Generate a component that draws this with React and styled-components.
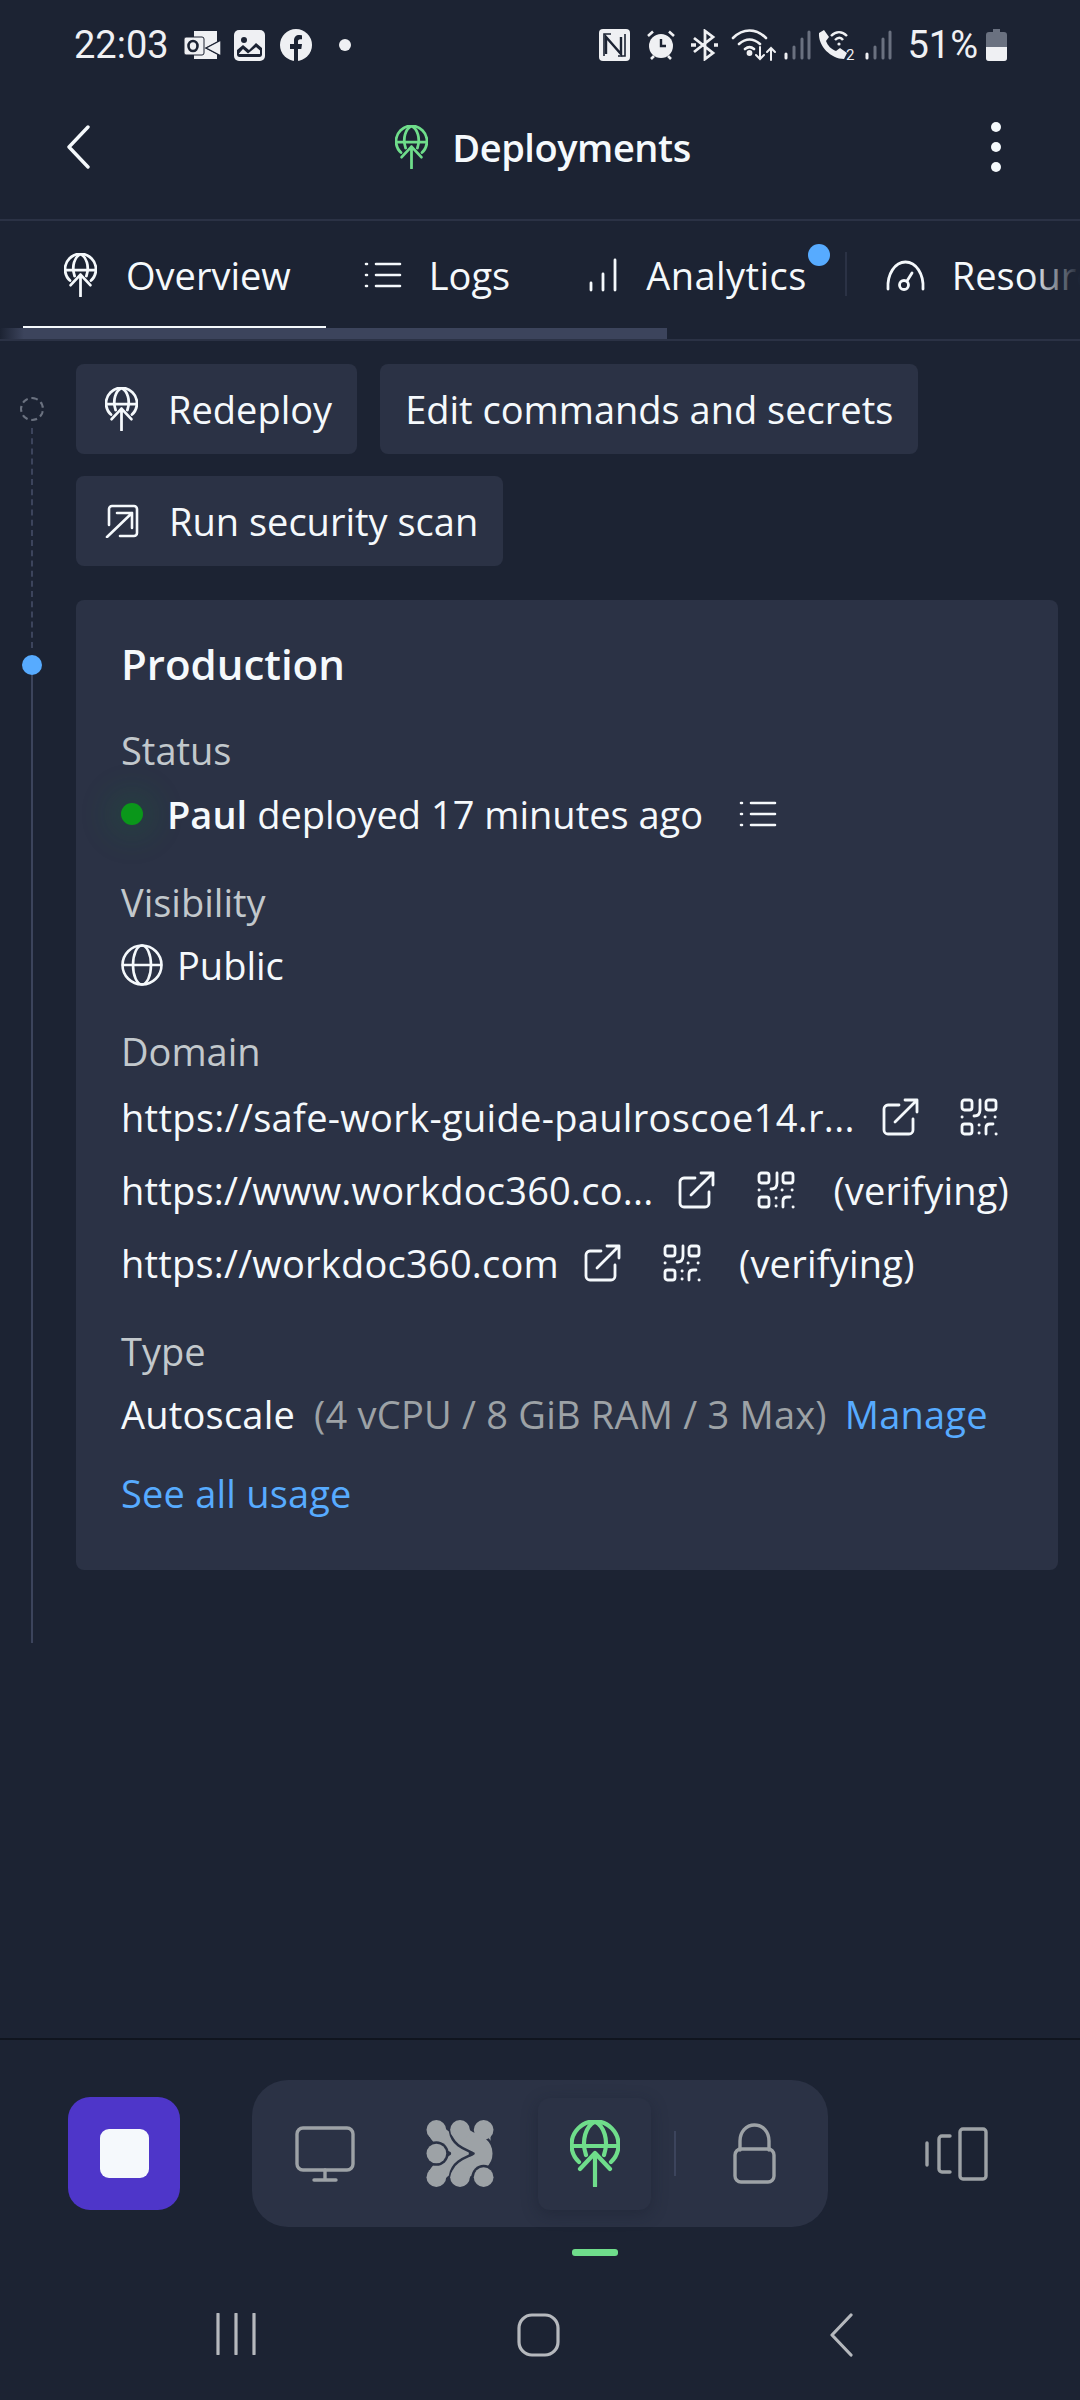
import React from "react";
import styled, { createGlobalStyle } from "styled-components";

const Global = createGlobalStyle`
  html, body { margin: 0; padding: 0; background: #1c2333; }
  * { box-sizing: border-box; }
`;

const Screen = styled.div`
  width: 1080px; height: 2400px; background: #1c2333; color: #f5f9fc;
  display: flex; flex-direction: column; overflow: hidden;
  font-family: "Open Sans", "Noto Sans", sans-serif; font-size: 38px; letter-spacing: 0;
`;
const StatusBar = styled.div`
  height: 90px; padding: 0 73px 0 74px; display: flex; align-items: center; justify-content: space-between;
  font-family: Roboto, sans-serif; letter-spacing: 0; color: #eff0f3; font-size: 38px;
`;
const StatusGroup = styled.div`display: flex; align-items: center;`;
const StatusSlot = styled.span`display: flex; align-items: center; margin-left: ${p => p.$ml ?? 0}px;`;
const Header = styled.div`
  height: 131px; padding: 0 79px 16px 66px; display: flex; align-items: center; justify-content: space-between;
  border-bottom: 2px solid #2b3245;
`;
const Title = styled.div`display: flex; align-items: center; gap: 24px; margin-left: 5px; font-size: 38px; font-weight: 600; letter-spacing: -0.45px;`;
const TabBar = styled.div`
  position: relative; height: 120px; display: flex; align-items: stretch; padding-left: 23px; overflow: hidden;
  border-bottom: 2px solid #2b3245; flex: none;
`;
const Tab = styled.div`
  position: relative; flex: none; display: flex; align-items: center; gap: ${p => p.$gap ?? 29}px; padding: 0 ${p => p.$pr ?? 37}px 0 ${p => p.$pl ?? 40}px; height: 107px;
  white-space: nowrap; color: #f5f9fc; letter-spacing: ${p => p.$ls ?? 0}px;
`;
const Underline = styled.span`position: absolute; left: 0; right: 0; bottom: 0; height: 2px; background: #f5f9fc;`;
const Badge = styled.span`position: absolute; right: 15px; top: 23px; width: 22px; height: 22px; border-radius: 50%; background: #57abff;`;
const TabDivider = styled.span`flex: none; width: 2px; height: 44px; background: #2b3245; margin-top: 31px;`;
const Thumb = styled.div`
  position: absolute; left: 0; bottom: 0; width: 667px; height: 11px;
  background: linear-gradient(90deg, #1c2333 0, #3c445c 24px);
`;
const Fade = styled.div`position: absolute; right: 0; top: 0; bottom: 11px; width: 50px; background: linear-gradient(90deg, rgba(28,35,51,0), #1c2333);`;
const Body = styled.div`flex: 1; display: flex; min-height: 0;`;
const Rail = styled.div`width: 64px; margin-right: 12px; flex: none; padding: 56px 0 0 0; display: flex; flex-direction: column; align-items: center;`;
const RingDot = styled.span`width: 24px; height: 24px; border: 2px dashed #6b7280; border-radius: 50%; flex: none;`;
const DashLine = styled.span`width: 0; height: 220px; margin: 7px 0; border-left: 2px dashed #3c445c;`;
const BlueDot = styled.span`width: 20px; height: 20px; border-radius: 50%; background: #57abff; flex: none;`;
const SolidLine = styled.span`width: 2px; height: 968px; background: #3c445c;`;
const Main = styled.div`flex: 1; padding: 23px 22px 0 0; min-width: 0;`;
const Actions = styled.div`display: flex; flex-wrap: wrap; gap: 22px 23px; margin-bottom: 34px;`;
const ActionButton = styled.div`
  height: 90px; background: #2b3245; border-radius: 8px; display: flex; align-items: center; gap: 30px; padding: 0 25px 0 ${p => p.$pl ?? 29}px; white-space: nowrap;
`;
const Card = styled.div`
  background: #2b3245; border-radius: 8px; padding: 39px 46px 50px 45px; height: 970px;
`;
const CardTitle = styled.div`font-size: 42px; font-weight: 600; line-height: 50px; letter-spacing: 0; margin-bottom: 36px;`;
const Field = styled.div`display: flex; flex-direction: column; gap: ${p => p.$gap ?? 14}px; margin-bottom: ${p => p.$mb ?? 38}px;`;
const Label = styled.div`color: #c2c8cc; line-height: 50px;`;
const Line = styled.div`display: flex; align-items: center; height: 50px; white-space: nowrap; letter-spacing: ${p => p.$ls ?? 0}px; gap: ${p => p.$gap ?? 0}px;`;
const GreenDot = styled.span`width: 22px; height: 22px; margin: 0 24px 0 0; border-radius: 50%; background: #0a971a; box-shadow: 0 0 30px 14px rgba(16,130,50,0.16); flex: none;`;
const Strong = styled.span`font-weight: 600; margin-right: 10px;`;
const IconGap = styled.span`display: flex; margin-left: ${p => p.$ml}px;`;
const DomainList = styled.div`display: flex; flex-direction: column; gap: 23px;`;
const Muted = styled.span`color: #9da2a6; margin: 0 18px 0 19px;`;
const LinkText = styled.span`color: #57abff;`;
const SeeAll = styled.div`color: #57abff; line-height: 50px; margin-top: -8px; letter-spacing: 0.2px;`;
const Dock = styled.div`
  flex: none; height: 234px; border-top: 2px solid #10151f; display: flex; align-items: flex-start; padding: 40px 0 0 68px; position: relative;
`;
const StopButton = styled.div`width: 112px; height: 113px; margin-top: 17px; border-radius: 22px; background: #4e36c9; display: flex; align-items: center; justify-content: center; flex: none;`;
const StopSquare = styled.span`width: 49px; height: 49px; border-radius: 9px; background: #f5f9fc;`;
const Pill = styled.div`
  width: 576px; height: 147px; margin-left: 72px; border-radius: 36px; background: #2b3245; display: flex; align-items: center; position: relative; flex: none;
`;
const DockItem = styled.div`position: absolute; left: ${p => p.$x}px; top: ${p => p.$y}px; display: flex;`;
const ActiveItem = styled.div`
  position: absolute; left: 286px; top: 18px; width: 113px; height: 112px; border-radius: 12px; background: #2b3245;
  box-shadow: 0 4px 16px rgba(20,26,40,0.35); display: flex; justify-content: center; padding-top: 22px;
`;
const DockDivider = styled.span`position: absolute; left: 422px; top: 51px; width: 2px; height: 45px; background: #3c445c;`;
const Indicator = styled.span`position: absolute; left: 572px; top: 209px; width: 46px; height: 7px; border-radius: 3px; background: #6fdd8b;`;
const Panels = styled.div`margin-left: 97px; margin-top: 47px; display: flex;`;
const NavBar = styled.div`flex: none; height: 128px; display: flex; align-items: flex-start; padding: 41px 0 0 216px;`;
const NavSlot = styled.span`display: flex; margin-left: ${p => p.$ml}px;`;

const Stroke = ({ w, h, vb, c = "#f5f9fc", sw = 3, children, fill = "none" }) => (
  <svg width={w} height={h} viewBox={vb} fill={fill} stroke={c} strokeWidth={sw} strokeLinecap="round" strokeLinejoin="round" style={{ flex: "none" }}>{children}</svg>
);
const GlobeUp = ({ w = 33, h = 44, c = "#f5f9fc", sw = 4.2 }) => (
  <Stroke w={w} h={h} vb="0 0 50 67" c={c} sw={sw}>
    <path d="M9 42A23.5 23.5 0 1 1 41 42" />
    <path d="M16 35C11 20 16 6 25 1.6C34 6 39 20 34 35" />
    <path d="M2 26H48" />
    <path d="M25 66V33M10 49L25 33L40 49" />
  </Stroke>
);
const ListIcon = () => (
  <Stroke w={38} h={28} vb="0 0 38 28" sw={2.6}>
    <path d="M12 3H36M12 14H36M12 25H36" /><path d="M2 3H3M2 14H3M2 25H3" />
  </Stroke>
);
const BarsIcon = () => (
  <Stroke w={28} h={34} vb="0 0 28 34" sw={2.8}>
    <path d="M2 32V25M14 32V16M26 32V2" />
  </Stroke>
);
const GaugeIcon = () => (
  <Stroke w={41} h={32} vb="0 0 41 32" sw={2.8}>
    <path d="M3 30C2 15 10 3 20.5 3C31 3 39 15 38 30" /><circle cx="19" cy="26" r="4.5" /><path d="M22 22L27 14" />
  </Stroke>
);
const ScanIcon = () => (
  <Stroke w={34} h={34} vb="0 0 34 34" sw={2.6}>
    <path d="M4 21V5A3 3 0 0 1 7 2H29A3 3 0 0 1 32 5V29A3 3 0 0 1 29 32H15" />
    <path d="M2 33L27 9M12 9H27V24" />
  </Stroke>
);
const GlobeIcon = () => (
  <Stroke w={42} h={42} vb="0 0 42 42" sw={2.6}>
    <circle cx="21" cy="21" r="19.5" /><ellipse cx="21" cy="21" rx="9" ry="19.5" /><path d="M2 21H40" />
  </Stroke>
);
const ExtIcon = () => (
  <Stroke w={37} h={38} vb="0 0 37 38" sw={2.8}>
    <path d="M17 7H6A4 4 0 0 0 2 11V32A4 4 0 0 0 6 36H27A4 4 0 0 0 31 32V21" />
    <path d="M13 24L35 2M23 2H35V14" />
  </Stroke>
);
const QrIcon = () => (
  <Stroke w={38} h={38} vb="0 0 38 38" sw={2.8}>
    <rect x="2" y="2" width="10" height="10" rx="2.5" /><rect x="26" y="2" width="10" height="10" rx="2.5" /><rect x="2" y="26" width="10" height="10" rx="2.5" />
    <path d="M20 2V12C20 16 18 18 14 18" /><path d="M2 19H2.2M25 19H25.2M35 19H35.2M19 27H19.2M19 35H19.2" />
    <path d="M26 36V30C26 27.5 27.5 26 30 26H33" /><path d="M36 36H36.2" />
  </Stroke>
);
const MonitorIcon = () => (
  <Stroke w={60} h={56} vb="0 0 60 56" c="#9da2a6" sw={3.4}>
    <rect x="2" y="2" width="56" height="42" rx="6" /><path d="M30 44V54M19 54H41" />
  </Stroke>
);
const LogoIcon = () => (
  <svg width="68" height="67" viewBox="10 10 68 68" fill="#9da2a6" style={{ flex: "none" }}>
    <circle cx="20" cy="20" r="10" /><circle cx="20" cy="68" r="10" />
    <g fill="none" strokeLinecap="round">
      <path d="M20 20C24 34 44 30 44 44C44 58 24 54 20 68" stroke="#9da2a6" strokeWidth="18" />
      <path d="M68 20V44" stroke="#9da2a6" strokeWidth="14" />
      <path d="M44 20C46 34 68 30 68 44C68 58 46 54 44 68" stroke="#2b3245" strokeWidth="23" />
      <path d="M44 20C46 34 68 30 68 44C68 58 46 54 44 68" stroke="#9da2a6" strokeWidth="18" />
    </g>
    <circle cx="44" cy="20" r="10" /><circle cx="44" cy="68" r="10" />
    <circle cx="20" cy="44" r="12.5" fill="#2b3245" />
    <circle cx="68" cy="68" r="12.5" fill="#2b3245" />
    <circle cx="20" cy="44" r="10" /><circle cx="68" cy="68" r="10" /><circle cx="68" cy="20" r="10" />
  </svg>
);
const LockIcon = () => (
  <Stroke w={43} h={61} vb="0 0 43 61" c="#9da2a6" sw={3.4}>
    <path d="M7 27V18C7 9 13 2 21.5 2C30 2 36 9 36 18V27" /><rect x="2" y="26" width="39" height="33" rx="6" />
  </Stroke>
);
const PanelsIcon = () => (
  <Stroke w={63} h={54} vb="0 0 63 54" c="#9da2a6" sw={3.4}>
    <path d="M2 16V38M25 9H17A3 3 0 0 0 14 12V42A3 3 0 0 0 17 45H25" /><rect x="35" y="2" width="26" height="50" rx="3" />
  </Stroke>
);

const Status = {
  Outlook: () => (
    <svg width="37" height="31" viewBox="0 0 37 31" style={{ flex: "none" }}>
      <path d="M10 1H33V12L21 18L33 24V29H10Z" fill="#eff0f3" />
      <rect x="0" y="7" width="20" height="18" rx="2" fill="#eff0f3" stroke="#1c2333" strokeWidth="1" />
      <ellipse cx="9" cy="16" rx="4.5" ry="5" fill="none" stroke="#1c2333" strokeWidth="2.6" />
      <path d="M22 18L37 10V26Z" fill="#eff0f3" stroke="#1c2333" strokeWidth="1.4" />
    </svg>
  ),
  Image: () => (
    <svg width="31" height="31" viewBox="0 0 31 31" style={{ flex: "none" }}>
      <rect width="31" height="31" rx="5" fill="#eff0f3" />
      <circle cx="10" cy="10" r="3" fill="#1c2333" />
      <path d="M3 25V20L9 15L15 20L22 13L28 18V25A2.5 2.5 0 0 1 25.5 27H5.5A2.5 2.5 0 0 1 3 25Z" fill="#1c2333" />
      <path d="M5 23.5L9 19L14 23.5L22 17L26 20.5V24H5Z" fill="#eff0f3" />
    </svg>
  ),
  Facebook: () => (
    <svg width="32" height="32" viewBox="0 0 32 32" style={{ flex: "none" }}>
      <circle cx="16" cy="16" r="16" fill="#eff0f3" />
      <path d="M14 32V20H10V15H14V11.5C14 8 16 6 19.2 6C20.5 6 22 6.3 22 6.3V10.3H20.3C18.6 10.3 18 11.3 18 12.4V15H22L21.3 20H18V32Z" fill="#1c2333" />
    </svg>
  ),
  Nfc: () => (
    <svg width="31" height="32" viewBox="0 0 31 32" style={{ flex: "none" }}>
      <rect width="31" height="32" rx="4" fill="#eff0f3" />
      <path d="M7 25V8L22 25V8" fill="none" stroke="#1c2333" strokeWidth="2.4" />
      <path d="M12 5H5V27M19 27H26V5" fill="none" stroke="#1c2333" strokeWidth="1.6" />
    </svg>
  ),
  Alarm: () => (
    <svg width="30" height="32" viewBox="0 0 30 32" style={{ flex: "none" }}>
      <circle cx="15" cy="17" r="12" fill="#eff0f3" />
      <path d="M15 10V17H20" fill="none" stroke="#1c2333" strokeWidth="2.4" />
      <path d="M2 7L7 2.5M28 7L23 2.5M5 30L8 27M25 30L22 27" fill="none" stroke="#eff0f3" strokeWidth="2.6" />
    </svg>
  ),
  Bluetooth: () => (
    <svg width="28" height="32" viewBox="0 0 28 32" fill="none" stroke="#eff0f3" strokeWidth="2.8" style={{ flex: "none" }}>
      <path d="M3 9L22 24L14 30V2L22 8L3 23" /><path d="M0 16H5M23 16H27" strokeWidth="3.4" />
    </svg>
  ),
  Wifi: () => (
    <svg width="46" height="32" viewBox="0 0 46 32" fill="none" stroke="#eff0f3" strokeWidth="2.6" strokeLinecap="round" style={{ flex: "none" }}>
      <path d="M2 9C12 -1 25 -1 35 9M8 15C15 9 22 9 29 15M14 20C17 17.5 20 17.5 23 20" />
      <circle cx="18.5" cy="24" r="1.6" fill="#eff0f3" />
      <path d="M29 18V30M25 26L29 30L33 26" strokeWidth="2" /><path d="M40 31V19M36 23L40 19L44 23" strokeWidth="2" />
    </svg>
  ),
  Signal: () => (
    <svg width="27" height="30" viewBox="0 0 27 30" strokeWidth="3" strokeLinecap="round" style={{ flex: "none" }}>
      <path d="M2 24V28" stroke="#eff0f3" /><path d="M10 17V28M18 9V28M25 2V28" stroke="#6a7180" />
    </svg>
  ),
  Call: () => (
    <svg width="40" height="32" viewBox="0 0 40 32" style={{ flex: "none" }}>
      <path d="M2 4L7 1L12 8L9 12C11 17 14 20 19 22L23 19L30 24L27 30C14 30 1 17 2 4Z" fill="#eff0f3" />
      <path d="M14 7C19 2 25 2 30 7M18 11C21 8 24 8 26 11" fill="none" stroke="#eff0f3" strokeWidth="2.4" />
      <circle cx="22" cy="15" r="1.6" fill="#eff0f3" />
      <text x="29" y="31" fontFamily="Roboto" fontSize="15" fill="#eff0f3">2</text>
    </svg>
  ),
  Battery: () => (
    <svg width="21" height="32" viewBox="0 0 21 32" style={{ flex: "none" }}>
      <path d="M7 0H14V3H18A3 3 0 0 1 21 6V29A3 3 0 0 1 18 32H3A3 3 0 0 1 0 29V6A3 3 0 0 1 3 3H7Z" fill="#6a7180" />
      <path d="M0 18H21V29A3 3 0 0 1 18 32H3A3 3 0 0 1 0 29Z" fill="#eff0f3" />
    </svg>
  ),
};

const NavStroke = ({ w, h, vb, children }) => (
  <svg width={w} height={h} viewBox={vb} fill="none" stroke="#b5b8bd" strokeWidth="3.2" strokeLinecap="round" strokeLinejoin="round" style={{ flex: "none" }}>{children}</svg>
);

const Dot = styled.span`width: 12px; height: 12px; border-radius: 50%; background: #eff0f3; margin-left: 27px;`;
const Percent = styled.span`font-size: 38px; line-height: 1; margin-left: 15px; margin-right: 8px;`;
const Kebab = styled.div`display: flex; flex-direction: column; gap: 10px;`;
const KebabDot = styled.span`width: 10px; height: 10px; border-radius: 50%; background: #f5f9fc;`;

export default function App() {
  return (
    <Screen>
      <Global />
      <StatusBar>
        <StatusGroup>
          <span>22:03</span>
          <StatusSlot $ml={15}><Status.Outlook /></StatusSlot>
          <StatusSlot $ml={13}><Status.Image /></StatusSlot>
          <StatusSlot $ml={15}><Status.Facebook /></StatusSlot>
          <Dot />
        </StatusGroup>
        <StatusGroup>
          <Status.Nfc />
          <StatusSlot $ml={16}><Status.Alarm /></StatusSlot>
          <StatusSlot $ml={15}><Status.Bluetooth /></StatusSlot>
          <StatusSlot $ml={12}><Status.Wifi /></StatusSlot>
          <StatusSlot $ml={7}><Status.Signal /></StatusSlot>
          <StatusSlot $ml={6}><Status.Call /></StatusSlot>
          <StatusSlot $ml={8}><Status.Signal /></StatusSlot>
          <Percent>51%</Percent>
          <Status.Battery />
        </StatusGroup>
      </StatusBar>
      <Header>
        <svg width="24" height="44" viewBox="0 0 24 44" fill="none" stroke="#f5f9fc" strokeWidth="3.4" strokeLinecap="round" strokeLinejoin="round"><path d="M22 2L3 22L22 42" /></svg>
        <Title><GlobeUp c="#6fdd8b" />Deployments</Title>
        <Kebab><KebabDot /><KebabDot /><KebabDot /></Kebab>
      </Header>
      <TabBar>
        <Thumb />
        <Tab $pl={41} $pr={35}><GlobeUp />Overview<Underline /></Tab>
        <Tab $pl={38} $pr={36} $gap={27}><ListIcon />Logs</Tab>
        <Tab $pl={43} $pr={38} $ls={0.45}><BarsIcon />Analytics<Badge /></Tab>
        <TabDivider />
        <Tab $pl={38} $gap={26}><GaugeIcon />Resources</Tab>
        <Fade />
      </TabBar>
      <Body>
        <Rail><RingDot /><DashLine /><BlueDot /><SolidLine /></Rail>
        <Main>
          <Actions>
            <ActionButton $pl={29}><GlobeUp />Redeploy</ActionButton>
            <ActionButton $pl={25}>Edit commands and secrets</ActionButton>
            <ActionButton $pl={29}><ScanIcon />Run security scan</ActionButton>
          </Actions>
          <Card>
            <CardTitle>Production</CardTitle>
            <Field>
              <Label>Status</Label>
              <Line><GreenDot /><Strong>Paul</Strong>deployed 17 minutes ago<IconGap $ml={36}><ListIcon /></IconGap></Line>
            </Field>
            <Field $gap={13} $mb={36}>
              <Label>Visibility</Label>
              <Line $gap={14}><GlobeIcon />Public</Line>
            </Field>
            <Field $gap={16} $mb={38}>
              <Label>Domain</Label>
              <DomainList>
                <Line $ls={0.32}>https://safe-work-guide-paulroscoe14.r...<IconGap $ml={27}><ExtIcon /></IconGap><IconGap $ml={41}><QrIcon /></IconGap></Line>
                <Line $ls={0.22}>https://www.workdoc360.co...<IconGap $ml={25}><ExtIcon /></IconGap><IconGap $ml={42}><QrIcon /></IconGap><IconGap $ml={38}>(verifying)</IconGap></Line>
                <Line $ls={0.22}>https://workdoc360.com<IconGap $ml={25}><ExtIcon /></IconGap><IconGap $ml={42}><QrIcon /></IconGap><IconGap $ml={38}>(verifying)</IconGap></Line>
              </DomainList>
            </Field>
            <Field $gap={13} $mb={37}>
              <Label>Type</Label>
              <Line $ls={0.22}>Autoscale<Muted>(4 vCPU / 8 GiB RAM / 3 Max)</Muted><LinkText>Manage</LinkText></Line>
            </Field>
            <SeeAll>See all usage</SeeAll>
          </Card>
        </Main>
      </Body>
      <Dock>
        <StopButton><StopSquare /></StopButton>
        <Pill>
          <DockItem $x={43} $y={46}><MonitorIcon /></DockItem>
          <DockItem $x={174} $y={40}><LogoIcon /></DockItem>
          <ActiveItem><GlobeUp w={50} h={67} c="#6fdd8b" /></ActiveItem>
          <DockDivider />
          <DockItem $x={481} $y={43}><LockIcon /></DockItem>
        </Pill>
        <Panels><PanelsIcon /></Panels>
        <Indicator />
      </Dock>
      <NavBar>
        <NavSlot $ml={0}><NavStroke w={40} h={42} vb="0 0 40 42"><path d="M2 1V41M20 1V41M38 1V41" /></NavStroke></NavSlot>
        <NavSlot $ml={261}><NavStroke w={43} h={44} vb="0 0 43 44"><rect x="2" y="2" width="39" height="40" rx="13" /></NavStroke></NavSlot>
        <NavSlot $ml={269}><NavStroke w={24} h={44} vb="0 0 24 44"><path d="M22 2L3 22L22 42" /></NavStroke></NavSlot>
      </NavBar>
    </Screen>
  );
}
